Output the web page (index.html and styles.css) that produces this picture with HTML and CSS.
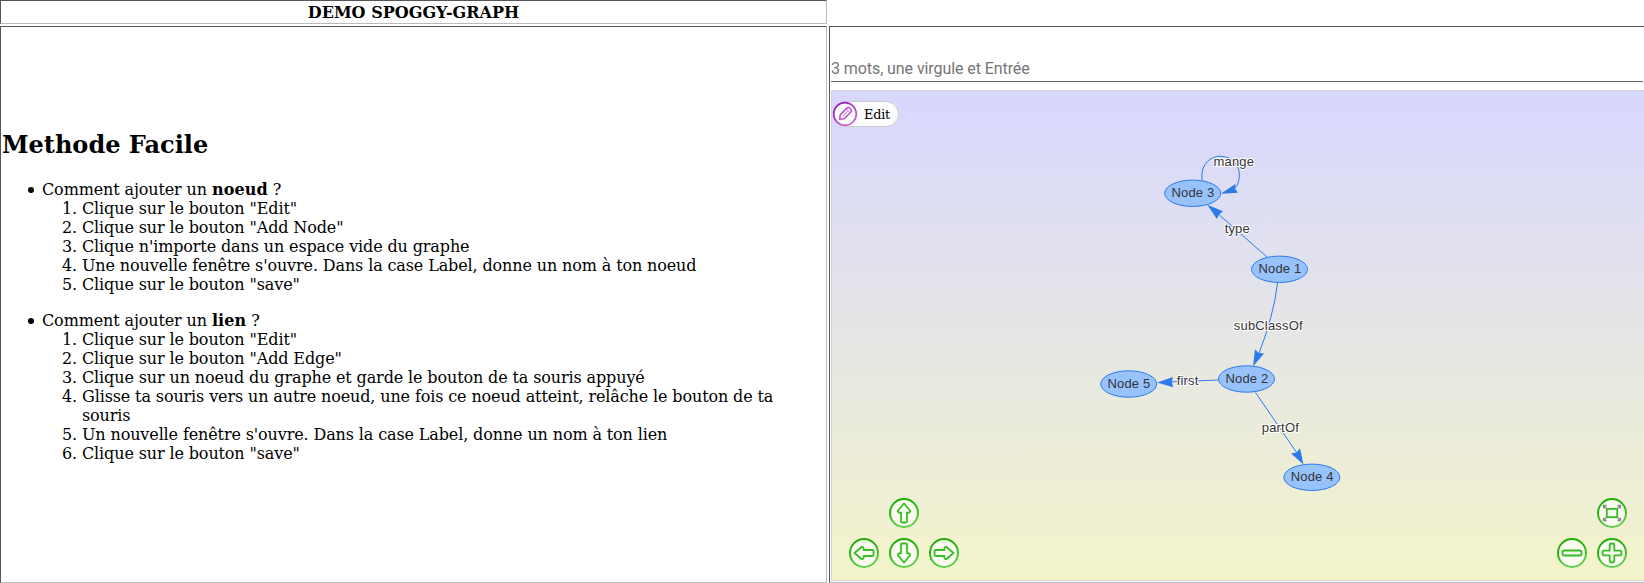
FILE: index.html
```
<!DOCTYPE html>
<html lang="fr">
<head>
<meta charset="utf-8">
<title>DEMO SPOGGY-GRAPH</title>
<link rel="stylesheet" href="styles.css">
</head>
<body>
<div class="board">
  <header class="cell title">DEMO SPOGGY-GRAPH</header>
  <main class="cell help">
    <h2>Methode Facile</h2>
    <ul>
      <li>Comment ajouter un <b>noeud</b> ?
        <ol>
          <li>Clique sur le bouton "Edit"</li>
          <li>Clique sur le bouton "Add Node"</li>
          <li>Clique n'importe dans un espace vide du graphe</li>
          <li>Une nouvelle fenêtre s'ouvre. Dans la case Label, donne un nom à ton noeud</li>
          <li>Clique sur le bouton "save"</li>
        </ol>
      </li>
      <li>Comment ajouter un <b>lien</b> ?
        <ol>
          <li>Clique sur le bouton "Edit"</li>
          <li>Clique sur le bouton "Add Edge"</li>
          <li>Clique sur un noeud du graphe et garde le bouton de ta souris appuyé</li>
          <li>Glisse ta souris vers un autre noeud, une fois ce noeud atteint, relâche le bouton de ta souris</li>
          <li>Un nouvelle fenêtre s'ouvre. Dans la case Label, donne un nom à ton lien</li>
          <li>Clique sur le bouton "save"</li>
        </ol>
      </li>
    </ul>
  </main>
  <section class="cell viewer">
    <input class="entry" type="text" placeholder="3 mots, une virgule et Entrée">
    <div class="graph">
      <svg class="network" width="812" height="489" viewBox="832 91 812 489">
        <g class="edges">
          <path d="M1202.5 181.5C1199 166 1210 156.2 1220 156.2C1233 156.2 1240 166 1239.3 176C1239 181 1238 185 1235 188"/>
          <path d="M1267 257L1216 212"/>
          <path d="M1277.5 283Q1274 315 1258 356"/>
          <path d="M1218 380L1168 382"/>
          <path d="M1255.5 392.5L1299 456"/>
        </g>
        <g class="heads">
          <path d="M1220.8 193.7L1235.5 184L1235 188.8L1238 192.7Z"/>
          <path d="M1207.3 204.8L1223 211.3L1219.2 214.3L1216.8 219Z"/>
          <path d="M1253 366.5L1255 349.3L1258.3 352.8L1264 353.5Z"/>
          <path d="M1157 382.6L1173 377L1171.8 382L1173.3 387.3Z"/>
          <path d="M1303.5 464.5L1291 453.5L1296.5 452.5L1300 448.3Z"/>
        </g>
        <g class="nodes">
          <ellipse cx="1192.7" cy="193.3" rx="28" ry="13.2"/>
          <ellipse cx="1279.5" cy="269.3" rx="28" ry="13.2"/>
          <ellipse cx="1246.5" cy="379" rx="28" ry="13.2"/>
          <ellipse cx="1311.8" cy="477.3" rx="28" ry="13.2"/>
          <ellipse cx="1128.7" cy="384" rx="28" ry="13.2"/>
        </g>
        <g class="labels">
          <text x="1192.9" y="197.3">Node 3</text>
          <text x="1279.9" y="273.3">Node 1</text>
          <text x="1246.9" y="383.3">Node 2</text>
          <text x="1312.2" y="481.3">Node 4</text>
          <text x="1129" y="388.3">Node 5</text>
        </g>
        <g class="labels edge-labels">
          <text x="1233.8" y="166">mange</text>
          <text x="1237.3" y="233">type</text>
          <text x="1268.3" y="330">subClassOf</text>
          <text x="1187.6" y="385">first</text>
          <text x="1280.4" y="432">partOf</text>
        </g>
      </svg>
      <button class="edit" type="button">
        <svg width="26" height="26" viewBox="0 0 26 26">
          <defs><linearGradient id="violet" x1="0" y1="0" x2=".7" y2="1"><stop offset="0" stop-color="#8f10ab"/><stop offset="1" stop-color="#c963da"/></linearGradient></defs>
          <circle cx="13" cy="13" r="11.3" fill="#fcfcfc" stroke="url(#violet)" stroke-width="1.7"/>
          <g transform="rotate(45 13 13)" fill="none" stroke="#bb55d0" stroke-width="1.5" stroke-linejoin="round"><path d="M10.2 7.5Q10.2 5.5 13 5.5Q15.8 5.5 15.8 7.5V17L13 20.5L10.2 17Z"/><path d="M10.2 8.5H15.8M13 9V16" stroke-width=".8"/></g>
        </svg>
        <span>Edit</span>
      </button>
      <svg class="pad left" width="110" height="70" viewBox="0 0 110 70">
        <defs>
          <linearGradient id="green" x1="0" y1="0" x2=".3" y2="1"><stop offset="0" stop-color="#1cab08"/><stop offset=".5" stop-color="#27b512"/><stop offset="1" stop-color="#5fd04e"/></linearGradient>
          <g id="arrow"><circle r="14" fill="#fbfbf0" stroke="none"/><path d="M0 -9.5L6 -2.5Q6.5 0 3 -.3V8Q3 9.5 1.5 9.5H-1.5Q-3 9.5 -3 8V-.3Q-6.5 0 -6 -2.5Z"/></g>
        </defs>
        <g class="glyphs">
          <use href="#arrow" transform="translate(55 15)"/>
          <use href="#arrow" transform="translate(15 55) rotate(-90)"/>
          <use href="#arrow" transform="translate(55 55) rotate(180)"/>
          <use href="#arrow" transform="translate(95 55) rotate(90)"/>
        </g>
        <g class="rings"><circle cx="55" cy="15" r="14"/><circle cx="15" cy="55" r="14"/><circle cx="55" cy="55" r="14"/><circle cx="95" cy="55" r="14"/></g>
      </svg>
      <svg class="pad right" width="70" height="70" viewBox="0 0 70 70">
        <g class="rings disc"><circle cx="55" cy="15" r="14"/><circle cx="15" cy="55" r="14"/><circle cx="55" cy="55" r="14"/></g>
        <g class="glyphs">
          <rect x="49.8" y="10.8" width="10.4" height="8.4"/>
          <rect x="5.5" y="52.5" width="19" height="5" rx="1.7"/>
          <path d="M52.7 47Q52.7 45.5 55 45.5T57.3 47V52.7H63Q64.5 52.7 64.5 55T63 57.3H57.3V63Q57.3 64.5 55 64.5T52.7 63V57.3H47Q45.5 57.3 45.5 55T47 52.7H52.7Z"/>
        </g>
        <path class="corners" d="M46.5 10.5V7.5H49.5M46.8 7.8L49.5 10.5M60.5 7.5H63.5V10.5M63.2 7.8L60.5 10.5M46.5 19.5V22.5H49.5M46.8 22.2L49.5 19.5M60.5 22.5H63.5V19.5M63.2 22.2L60.5 19.5"/>
      </svg>
    </div>
  </section>
</div>
</body>
</html>
```
FILE: styles.css
```
* { box-sizing: border-box; }
body {
  margin: 0;
  background: #fff;
  color: #000;
  font: 16px/19px "DejaVu Serif", serif;
}
.board {
  display: grid;
  grid-template-columns: 827px 818px;
  grid-template-rows: 24px 557px;
  gap: 2px;
  width: 100%;
  height: 583px;
  overflow: hidden;
}
.cell {
  border: 1px solid;
  border-color: #555 #bbb #bbb #555;
  padding: 1px;
}
.title { text-align: center; font-weight: bold; line-height: 21px; letter-spacing: .02px; }
.help {
  grid-row: 2;
  display: flex;
  flex-direction: column;
  justify-content: center;
}
.help h2 { margin: 0 0 21px; font-size: 24px; line-height: 28px; }
.help ul { margin: 0 0 15px; padding-left: 40px; list-style: none; letter-spacing: -.125px; }
.help ol { margin: 0; padding-left: 40px; list-style: decimal; }
.help b { letter-spacing: .1px; }
.help ul > li { position: relative; }
.help ul > li + li { margin-top: 17px; }
.help ul > li::before {
  content: "";
  position: absolute;
  left: -14px;
  top: 7px;
  width: 6px;
  height: 6px;
  border-radius: 50%;
  background: #000;
}
.help ol > li { position: static; }
.help ol > li::before { display: none; }
.viewer {
  grid-row: 2;
  display: flex;
  flex-direction: column;
  gap: 8px;
  padding-top: 28px;
}
.entry {
  width: 812px;
  height: 27px;
  padding: 0;
  border: 0;
  border-bottom: 1px solid #666;
  outline: 0;
  background: none;
  font: 16px Roboto, sans-serif;
  letter-spacing: -.08px;
}
.entry::placeholder { color: #757575; }
.graph {
  position: relative;
  height: 491px;
  border: 1px solid #d3d3d3;
  background: linear-gradient(#d7d7ff, #f4f4cb);
}
.network { display: block; }
.edges { fill: none; stroke: #2b7ce9; stroke-width: 1; }
.heads { fill: #2b7ce9; }
.nodes { fill: #97c2fc; stroke: #2b7ce9; stroke-width: 1; }
.labels {
  fill: #343434;
  font: 13px "Liberation Sans", Arial, sans-serif;
  text-anchor: middle;
  letter-spacing: .17px;
}
.edge-labels { stroke: #fff; stroke-width: 2px; paint-order: stroke; stroke-linejoin: round; }
.edit {
  position: absolute;
  left: 1px;
  top: 10px;
  display: flex;
  align-items: center;
  gap: 6px;
  width: 66px;
  height: 26px;
  padding: 0;
  border: 1px solid #ccc;
  border-radius: 13px;
  background: #fcfcfc;
  color: #000;
  font: 12.8px "DejaVu Serif", serif;
  letter-spacing: -.2px;
}
.edit svg { flex: none; margin-left: -2px; }
.pad { position: absolute; bottom: 12px; }
.left { left: 17px; }
.right { right: 17px; }
.rings { fill: none; stroke: url(#green); stroke-width: 2; }
.disc { fill: #fbfbf0; }
.glyphs { fill: none; stroke: #35bd24; stroke-width: 1.8; stroke-linejoin: round; }
.corners { fill: none; stroke: #888; stroke-width: 1.3; }
```
